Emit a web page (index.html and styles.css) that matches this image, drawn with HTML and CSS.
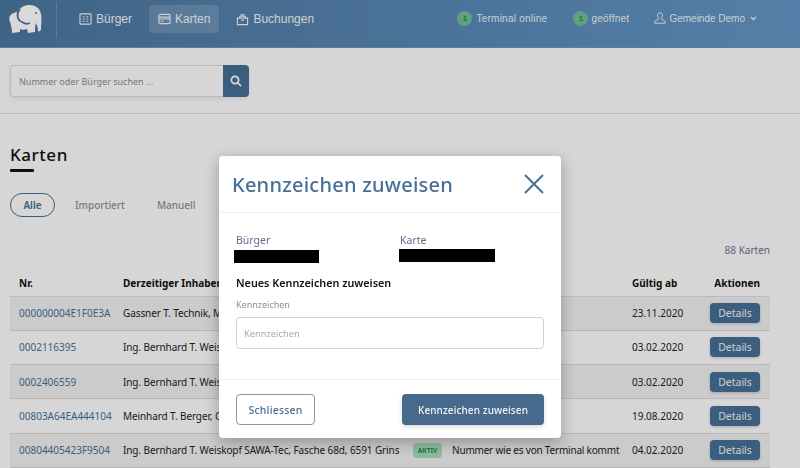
FILE: index.html
```html
<!DOCTYPE html>
<html lang="de">
<head>
    <meta charset="UTF-8">
    <meta name="viewport" content="width=device-width, initial-scale=1.0">
    <title>Karten</title>
    <link rel="stylesheet" href="styles.css">
</head>
<body>
    <header class="topbar">
        <a class="logo" href="#">
            <svg width="33" height="30" viewBox="9 3 33 30">
                <path fill="#fff" d="M10 15 C12 12 15 11 18 11 C20 6 25 4 29 4 C35 4 40 7 41 13 C42 18 41 25 41 28 C41 30 39 31 38 30 C38 27 37 24 36 22 C35 25 35 28 35 31 L28 32 L27 28 C24 29 22 29 20 28 L20 31 L12 32 C12 28 11 24 10 21 C9 18 9 16 10 15 Z"/>
                <path fill="none" stroke="#4e779f" stroke-width="1.8" d="M20 8 C16 13 17 19 22 21 C25 23 28 23 30 22"/>
                <circle cx="36" cy="12" r="1" fill="#4e779f"/>
            </svg>
        </a>
        <nav class="mainnav">
            <a class="navlink" href="#">
                <svg width="13" height="12" viewBox="0 0 14 13" fill="none" stroke="currentColor" stroke-width="1.2"><rect x="1" y="1" width="12" height="11" rx="1"/><path d="M4 4h2M8 4h2M4 6.5h2M8 6.5h2M4 9h2M8 9h2"/></svg>
                Bürger
            </a>
            <a class="navlink active" href="#">
                <svg width="13" height="12" viewBox="0 0 14 13" fill="none" stroke="currentColor" stroke-width="1.2"><rect x="1" y="1.5" width="12" height="10" rx="1"/><path d="M1 4.5h12M1 6.5h12M3 9h3"/></svg>
                Karten
            </a>
            <a class="navlink" href="#">
                <svg width="13" height="13" viewBox="0 0 14 14" fill="none" stroke="currentColor" stroke-width="1.2"><path d="M1.5 5.5h11v7h-11zM4 5.5v-2h6v2M5 2h4M5.5 8h3"/></svg>
                Buchungen
            </a>
        </nav>
        <div class="status">
            <span class="status-item"><span class="dot">1</span>Terminal online</span>
            <span class="status-item open"><span class="dot">1</span>geöffnet</span>
            <span class="user">
                <svg width="12" height="12" viewBox="0 0 12 12" fill="none" stroke="currentColor" stroke-width="1"><path d="M6 .8c-1.600 0-2.500 1.100-2.500 2.500 0 1.200.6 2.300 1.100 3 .2.500 0 1-.6 1.300L1.500 8.700c-.5.300-.7.600-.7 1.100v1.400h10.400V9.800c0-.5-.2-.8-.7-1.100L8 7.600c-.6-.3-.8-.8-.6-1.300.5-.7 1.100-1.800 1.100-3C8.500 1.900 7.600.8 6 .8z"/></svg>
                Gemeinde Demo
                <svg class="chev" width="7" height="5" viewBox="0 0 7 5" fill="none" stroke="currentColor" stroke-width="1.300"><path d="M1 1l2.500 2.500L6 1"/></svg>
            </span>
        </div>
    </header>

    <section class="searchbar">
        <div class="search">
            <input class="search-input" type="text" placeholder="Nummer oder Bürger suchen ...">
            <button class="search-btn">
                <svg width="12" height="12" viewBox="0 0 12 12" fill="none" stroke="#fff" stroke-width="1.700"><circle cx="5" cy="5" r="3.600"/><path d="M7.800 7.800L11 11"/></svg>
            </button>
        </div>
    </section>

    <main class="content">
        <h1 class="title">Karten</h1>
        <div class="tabs">
            <a class="tab active" href="#">Alle</a>
            <a class="tab" href="#">Importiert</a>
            <a class="tab" href="#">Manuell</a>
        </div>
        <div class="count">88 Karten</div>
        <table class="cards">
            <colgroup>
                <col class="c-nr"><col class="c-owner"><col class="c-state"><col class="c-note"><col class="c-date"><col class="c-act">
            </colgroup>
            <thead>
                <tr><th>Nr.</th><th>Derzeitiger Inhaber</th><th>Status</th><th>Kommentar</th><th>Gültig ab</th><th class="right">Aktionen</th></tr>
            </thead>
            <tbody>
                <tr><td><a href="#">000000004E1F0E3A</a></td><td class="owner">Gassner T. Technik, Mo</td><td></td><td></td><td>23.11.2020</td><td class="right"><button class="details">Details</button></td></tr>
                <tr><td><a href="#">0002116395</a></td><td class="owner">Ing. Bernhard T. Weiskopf SAWA-Tec</td><td></td><td></td><td>03.02.2020</td><td class="right"><button class="details">Details</button></td></tr>
                <tr><td><a href="#">0002406559</a></td><td class="owner">Ing. Bernhard T. Weiskopf SAWA-Tec</td><td></td><td></td><td>03.02.2020</td><td class="right"><button class="details">Details</button></td></tr>
                <tr><td><a href="#">00803A64EA444104</a></td><td class="owner">Meinhard T. Berger, Grins</td><td></td><td></td><td>19.08.2020</td><td class="right"><button class="details">Details</button></td></tr>
                <tr><td><a href="#">00804405423F9504</a></td><td class="owner">Ing. Bernhard T. Weiskopf SAWA-Tec, Fasche 68d, 6591 Grins</td><td><span class="badge">AKTIV</span></td><td class="note">Nummer wie es von Terminal kommt</td><td>04.02.2020</td><td class="right"><button class="details">Details</button></td></tr>
            </tbody>
        </table>
    </main>

    <div class="backdrop"></div>

    <div class="modal">
        <div class="modal-head">
            <h2 class="modal-title">Kennzeichen zuweisen</h2>
            <svg class="close" width="20" height="20" viewBox="0 0 20 20" fill="none" stroke="#476f95" stroke-width="2"><path d="M1 1l18 18M19 1L1 19"/></svg>
        </div>
        <div class="modal-body">
            <div class="info">
                <div class="info-col">
                    <div class="info-label">Bürger</div>
                    <div class="redacted r-one"></div>
                </div>
                <div class="info-col">
                    <div class="info-label">Karte</div>
                    <div class="redacted r-two"></div>
                </div>
            </div>
            <h3 class="subtitle">Neues Kennzeichen zuweisen</h3>
            <label class="field-label">Kennzeichen</label>
            <input class="field" type="text" placeholder="Kennzeichen">
        </div>
        <div class="modal-foot">
            <button class="btn-outline">Schliessen</button>
            <button class="btn-primary">Kennzeichen zuweisen</button>
        </div>
    </div>
</body>
</html>
```

FILE: styles.css
```css
* {
    box-sizing: border-box;
}

html, body {
    height: 468px;
    overflow: hidden;
}

body {
    margin: 0;
    background: #fbfcfb;
    color: #222;
    font-family: "Noto Sans", sans-serif;
    font-size: 10px;
}

a {
    color: inherit;
    text-decoration: none;
}

/* top bar */
.topbar {
    display: flex;
    align-items: flex-start;
    height: 48px;
    padding-left: 9px;
    background: linear-gradient(90deg, #4c769e, #6496c6);
    border-bottom: 1px solid #6f93b6;
    font-family: "Liberation Sans", sans-serif;
    color: #fff;
}

.logo {
    display: flex;
    width: 48px;
    height: 36px;
    margin-top: 2px;
    padding-top: 2px;
    border-right: 1px solid #6c90b2;
}

.mainnav {
    display: flex;
    gap: 8px;
    margin-left: 13px;
    margin-top: 5px;
}

.navlink {
    display: flex;
    align-items: center;
    gap: 4px;
    height: 28px;
    padding: 0 9px;
    border-radius: 4px;
    font-size: 12px;
    color: #f2f5f8;
}

.navlink.active {
    background: rgba(255, 255, 255, .15);
}

.status {
    display: flex;
    align-items: center;
    margin-left: auto;
    margin-top: 9px;
    padding-right: 43px;
    height: 18px;
    font-size: 10px;
    letter-spacing: .25px;
    color: #eef2f6;
}

.status-item {
    display: flex;
    align-items: center;
    gap: 4px;
}

.status-item.open {
    margin-left: 26px;
    gap: 3px;
}

.dot {
    display: flex;
    align-items: center;
    justify-content: center;
    width: 15px;
    height: 15px;
    border-radius: 50%;
    background: #6fbc96;
    color: #1d8a4c;
    font-size: 8px;
    font-weight: bold;
    letter-spacing: 0;
}

.user {
    display: flex;
    align-items: center;
    gap: 3px;
    margin-left: 25px;
    letter-spacing: 0;
}

.chev {
    margin-left: 2px;
}

/* search */
.searchbar {
    height: 66px;
    padding: 17px 10px 0;
    border-bottom: 1px solid #dcdcdc;
}

.search {
    display: flex;
    width: 239px;
    height: 32px;
    border-radius: 4px;
    box-shadow: 0 2px 4px rgba(0, 0, 0, .08);
}

.search-input {
    flex: 1;
    min-width: 0;
    padding: 0 8px;
    border: 1px solid #dadcdc;
    border-right: none;
    border-radius: 4px 0 0 4px;
    background: #fbfcfb;
    font-family: inherit;
    font-size: 9px;
    outline: none;
}

.search-input::placeholder {
    color: #8a8f95;
}

.search-btn {
    display: flex;
    align-items: center;
    justify-content: center;
    width: 26px;
    border: none;
    border-radius: 0 4px 4px 0;
    background: #476f95;
}

/* content */
.content {
    padding: 0 30px 0 10px;
}

.title {
    margin: 28px 0 0;
    font-size: 17px;
    font-weight: 500;
    line-height: 26px;
    letter-spacing: .55px;
    color: #111;
}

.title::after {
    content: "";
    display: block;
    width: 24px;
    height: 3px;
    margin-top: 1px;
    background: #111;
    border-radius: 1px;
}

.tabs {
    display: flex;
    align-items: center;
    margin-top: 21px;
}

.tab {
    display: flex;
    align-items: center;
    height: 24px;
    padding: 0 12px;
    margin-right: 8px;
    border-radius: 12px;
    font-size: 10px;
    font-weight: 500;
    color: #8d9094;
}

.tab.active {
    justify-content: center;
    width: 45px;
    padding: 0;
    border: 1.5px solid #476f95;
    color: #476f95;
    font-weight: 600;
}

.count {
    margin-top: 26px;
    text-align: right;
    font-size: 10px;
    line-height: 14px;
    color: #6d7492;
}

.cards {
    width: 760px;
    margin-top: 13px;
    border-collapse: collapse;
    table-layout: fixed;
    font-size: 10px;
    white-space: nowrap;
}

.c-nr { width: 104px; }
.c-owner { width: 290px; }
.c-state { width: 39px; }
.c-note { width: 180px; }
.c-date { width: 78px; }
.c-act { width: 69px; }

.cards th {
    height: 26px;
    padding: 0 0 0 9px;
    text-align: left;
    font-weight: 700;
    color: #111;
    border-bottom: 1px solid #dcdcdc;
}

.cards td {
    height: 34.300px;
    padding: 0 0 0 9px;
    overflow: hidden;
    border-bottom: 1px solid #d8d8d8;
}

.cards td a {
    color: #476f95;
}

.cards .owner {
    letter-spacing: -.1px;
}

.cards .note {
    letter-spacing: -.2px;
}

.cards tbody tr:nth-child(odd) {
    background: #efefef;
}

.cards .right {
    padding-right: 10px;
    text-align: right;
}

.details {
    width: 50px;
    height: 20px;
    padding: 0;
    border: none;
    border-radius: 4px;
    background: #476f95;
    box-shadow: 0 1px 3px rgba(0, 0, 0, .2);
    color: #eef2f6;
    font-family: inherit;
    font-size: 10.5px;
    vertical-align: middle;
}

.badge {
    display: inline-block;
    width: 29px;
    height: 15px;
    border-radius: 4px;
    background: #a6dcb9;
    color: #1f8a4a;
    font-size: 6.500px;
    font-weight: 700;
    line-height: 15px;
    text-align: center;
    vertical-align: middle;
}

/* dim layer and dialog */
.backdrop {
    position: fixed;
    inset: 0;
    background: rgba(0, 0, 0, .15);
}

.modal {
    position: fixed;
    left: 219px;
    top: 156px;
    width: 342px;
    height: 282px;
    background: #fff;
    border-radius: 4px;
    box-shadow: 0 4px 16px rgba(0, 0, 0, .3);
}

.modal-head {
    display: flex;
    align-items: center;
    justify-content: space-between;
    height: 57px;
    padding: 0 17px 0 13px;
    border-bottom: 1px solid #eee;
}

.modal-title {
    margin: 0;
    font-size: 20px;
    font-weight: 500;
    letter-spacing: .25px;
    color: #476f95;
}

.modal-body {
    height: 167px;
    padding: 20px 17px 0;
    border-bottom: 1px solid #f0f0f0;
}

.info {
    display: flex;
}

.info-col {
    flex: none;
    width: 164px;
}

.info-label {
    font-size: 10.5px;
    line-height: 15px;
    color: #636c8c;
}

.redacted {
    height: 13px;
    background: #000;
}

.r-one {
    width: 85px;
    margin-top: 2px;
    margin-left: -2px;
}

.r-two {
    width: 96px;
    margin-top: 1px;
    margin-left: -1px;
}

.subtitle {
    margin: 12px 0 0;
    font-size: 10.800px;
    font-weight: 600;
    line-height: 16px;
    color: #111;
}

.field-label {
    display: block;
    margin-top: 7px;
    font-size: 9px;
    line-height: 14px;
    color: #8a8d91;
}

.field {
    display: block;
    width: 308px;
    height: 32px;
    margin-top: 5px;
    padding: 0 7px;
    border: 1px solid #cfd3d6;
    border-radius: 4px;
    font-family: inherit;
    font-size: 9.300px;
    outline: none;
}

.field::placeholder {
    color: #a8abaf;
}

.modal-foot {
    display: flex;
    justify-content: space-between;
    padding: 14px 17px 0;
}

.btn-outline,
.btn-primary {
    height: 31px;
    border-radius: 4px;
    font-family: inherit;
    font-weight: 500;
}

.btn-outline {
    width: 79px;
    border: 1px solid #7d9ab6;
    background: #fff;
    color: #476f95;
    font-size: 10.500px;
    letter-spacing: .2px;
}

.btn-primary {
    width: 142px;
    border: none;
    background: #476a8c;
    box-shadow: 0 2px 4px rgba(0, 0, 0, .15);
    color: #f3f5f8;
    font-size: 10px;
    letter-spacing: .1px;
}
```
